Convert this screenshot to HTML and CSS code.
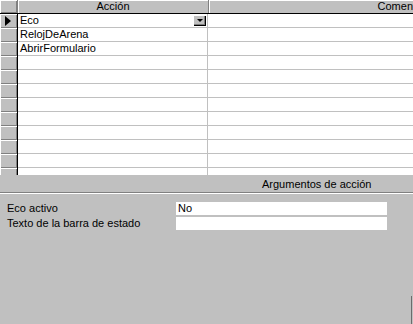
FILE: index.html
```html
<!DOCTYPE html>
<html lang="es">
<head>
  <meta charset="UTF-8" />
  <title>Macro</title>
  <link rel="stylesheet" href="styles.css">
</head>
<body>
  <section class="grid">
    <div class="row head">
      <div class="sel"></div>
      <div class="cell action">Acción</div>
      <div class="cell comment">Comentario</div>
    </div>
    <div class="rows" id="rows"></div>
  </section>
  <section class="args">
    <div class="args-title">Argumentos de acción</div>
    <div class="arg">
      <span class="arg-label">Eco activo</span>
      <span class="arg-value">No</span>
    </div>
    <div class="arg">
      <span class="arg-label">Texto de la barra de estado</span>
      <span class="arg-value"></span>
    </div>
  </section>
  <div class="edge"></div>
  <script>
    const actions = ['Eco', 'RelojDeArena', 'AbrirFormulario'];
    const rows = document.getElementById('rows');
    for (let i = 0; i < 12; i++) {
      const row = document.createElement('div');
      row.className = 'row' + (i === 0 ? ' current' : '');
      row.innerHTML = `
        <div class="sel">${i === 0 ? '<span class="arrow"></span>' : ''}</div>
        <div class="cell action">${actions[i] || ''}${i === 0 ? '<span class="drop"><span class="tri"></span></span>' : ''}</div>
        <div class="cell comment"></div>
      `;
      rows.appendChild(row);
    }
  </script>
</body>
</html>
```
FILE: styles.css
```css
body {
  margin: 0;
  width: 413px;
  height: 324px;
  overflow: hidden;
  background: #c0c0c0;
  font-family: "Liberation Sans", Arial, sans-serif;
  font-size: 11px;
  color: #000;
  position: relative;
}
.grid {
  height: 175px;
  overflow: hidden;
  background: #fff;
}
.row {
  display: flex;
  width: 640px;
  height: 14px;
}
.sel {
  width: 17px;
  flex: none;
  background: #c0c0c0;
  border-right: 1px solid #000;
  box-shadow: inset 1px 1px 0 #fff, inset -1px -1px 0 #808080;
  position: relative;
}
.cell {
  flex: none;
  height: 13px;
  line-height: 13px;
  border-bottom: 1px solid #c0c0c0;
  border-right: 1px solid #c0c0c0;
  white-space: nowrap;
  overflow: hidden;
}
.action {
  width: 187px;
  padding-left: 2px;
  position: relative;
}
.comment {
  width: 394px;
}
.head {
  height: 13px;
  border-bottom: 1px solid #000;
}
.head .sel {
  border-right: 1px solid #808080;
}
.head .cell {
  height: 13px;
  line-height: 12px;
  background: #c0c0c0;
  border: none;
  border-right: 1px solid #808080;
  box-shadow: inset 1px 1px 0 #fff;
  text-align: center;
}
.head .action {
  width: 190px;
  padding-left: 0;
}
.arrow {
  position: absolute;
  left: 5px;
  top: 2px;
  border-left: 6px solid #000;
  border-top: 5px solid transparent;
  border-bottom: 5px solid transparent;
}
.drop {
  position: absolute;
  right: 1px;
  top: 1px;
  width: 13px;
  height: 11px;
  background: #c0c0c0;
  box-shadow: inset 1px 1px 0 #fff, inset -1px -1px 0 #000, inset -2px -2px 0 #808080;
}
.tri {
  position: absolute;
  left: 4px;
  top: 4px;
  border-top: 3px solid #000;
  border-left: 3px solid transparent;
  border-right: 3px solid transparent;
}
.args {
  padding-top: 3px;
}
.args-title {
  height: 14px;
  line-height: 13px;
  padding-left: 262px;
  border-bottom: 1px solid #808080;
  box-shadow: 0 1px 0 #fff;
}
.arg {
  display: flex;
  align-items: center;
  height: 14px;
  padding-left: 7px;
}
.args-title + .arg {
  margin-top: 8px;
}
.arg + .arg {
  margin-top: 1px;
}
.arg-label {
  width: 169px;
}
.arg-value {
  width: 209px;
  height: 13px;
  line-height: 13px;
  background: #fff;
  padding-left: 2px;
}
.edge {
  position: absolute;
  right: 1px;
  top: 296px;
  width: 1px;
  height: 28px;
  background: #6c6c6c;
}
```
